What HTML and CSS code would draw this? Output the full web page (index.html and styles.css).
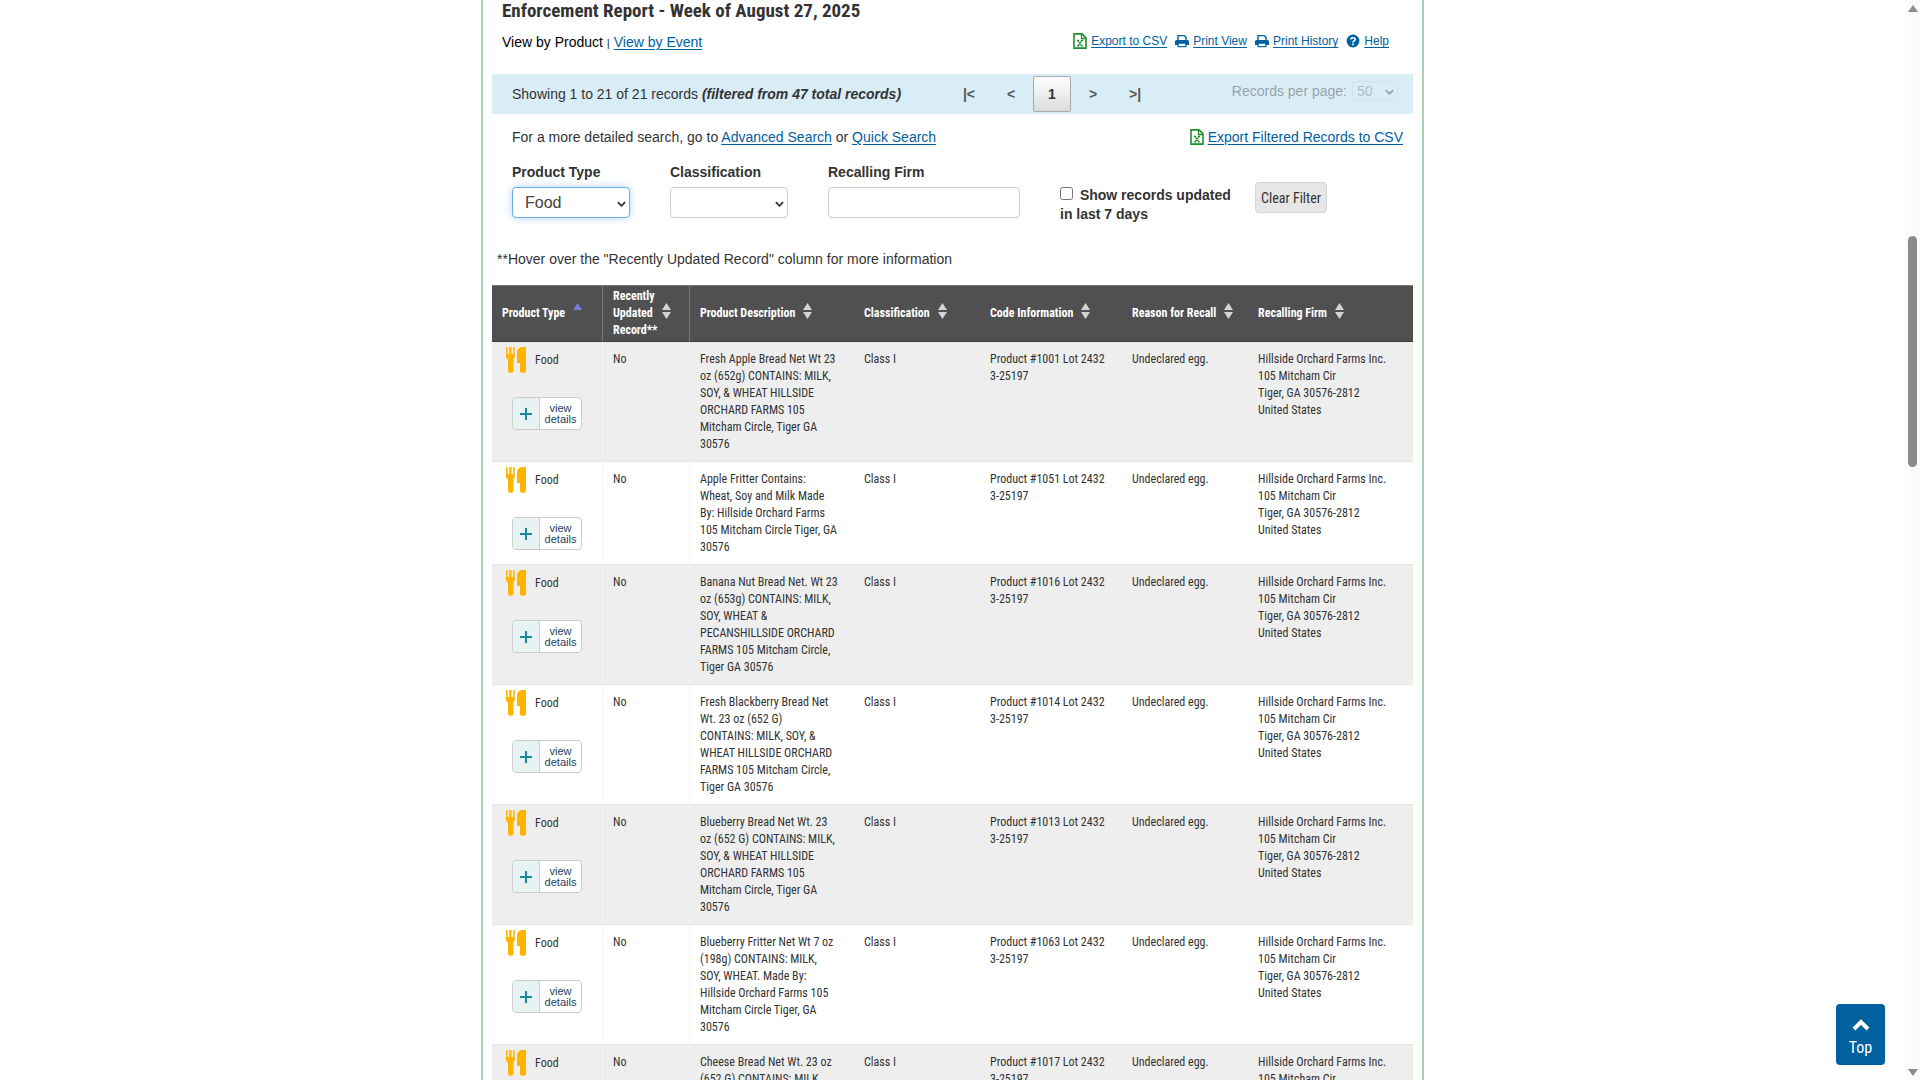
FILE: index.html
```html
<!DOCTYPE html>
<html lang="en">
<head>
<meta charset="utf-8">
<title>Enforcement Report - Week of August 27, 2025</title>
<link rel="stylesheet" href="styles.css">
</head>
<body>
<svg class="sprite" width="0" height="0" aria-hidden="true">
  <symbol id="csv" viewBox="0 0 14 16">
    <path d="M1 .9h8l4 4v10.2H1z" fill="#fff" stroke="#1e8e2e" stroke-width="1.6"/>
    <path d="M8.500 1v4.500H13" fill="none" stroke="#1e8e2e" stroke-width="1.300"/>
    <path d="M4.800 7.500l4.200 5.500M9 7.500l-4.200 5.500M3.800 7.400h2.400M7.800 7.400h2.400M3.800 13h2.400M7.800 13h2.400" fill="none" stroke="#1e8e2e" stroke-width="1.200"/>
  </symbol>
  <symbol id="print" viewBox="0 0 14 14">
    <path d="M3 7V1.600h6.200L11 3.400V7" fill="#fff" stroke="#0060a0" stroke-width="1.400"/>
    <path d="M1.500 6h11A1.500 1.500 0 0 1 14 7.500V11h-2.500v2.300h-9V11H0V7.500A1.500 1.500 0 0 1 1.500 6z" fill="#0060a0"/>
    <path d="M3.800 9.800h6.400v2.300H3.800z" fill="#fff"/>
  </symbol>
  <symbol id="help" viewBox="0 0 14 14">
    <circle cx="7" cy="7" r="6.400" fill="#0060a0"/>
    <path d="M4.800 5.400C4.900 3.200 9.200 3.200 9.200 5.400 9.200 6.900 7 6.800 7 8.400" fill="none" stroke="#fff" stroke-width="1.700"/>
    <path d="M6.100 9.400h1.800v1.800H6.100z" fill="#fff"/>
  </symbol>
  <symbol id="food" viewBox="0 0 20 26">
    <path d="M0 0h1.600v7h1.600V0h2.400v7h1.600V0h1.600v9.500c0 1.600-.8 2.400-1.300 2.900V24a1.800 1.800 0 0 1-1.800 1.800H3.800A1.800 1.800 0 0 1 2 24V12.400C1 11.800 0 11 0 9.500z" fill="#ffb400"/>
    <path d="M20 0v24a1.800 1.800 0 0 1-1.800 1.800h-2.400A1.800 1.800 0 0 1 14 24v-8h-3V5.500C11 2.500 13 0 16.500 0z" fill="#ffb400"/>
  </symbol>
  <symbol id="sort" viewBox="0 0 9 16">
    <path d="M4.500 0L9 7H0zM0 9h9l-4.500 7z" fill="#d4d4d4"/>
  </symbol>
</svg>

<main class="panel">
  <h1>Enforcement Report - Week of August 27, 2025</h1>
  <div class="top-row">
    <p class="views"><span class="current">View by Product</span> <small>|</small> <a href="#event">View by Event</a></p>
    <nav class="tools">
      <a href="#csv"><svg class="i-csv"><use href="#csv"/></svg><span>Export to CSV</span></a>
      <a href="#print"><svg class="i-tool"><use href="#print"/></svg><span>Print View</span></a>
      <a href="#history"><svg class="i-tool"><use href="#print"/></svg><span>Print History</span></a>
      <a href="#help"><svg class="i-tool"><use href="#help"/></svg><span>Help</span></a>
    </nav>
  </div>

  <div class="pager">
    <p class="info">Showing 1 to 21 of 21 records <strong><em>(filtered from 47 total records)</em></strong></p>
    <div class="pages">
      <button type="button">|&lt;</button>
      <button type="button">&lt;</button>
      <button type="button" class="active">1</button>
      <button type="button">&gt;</button>
      <button type="button">&gt;|</button>
    </div>
    <div class="per-page">
      <label for="per">Records per page:</label>
      <span class="select small"><select id="per" disabled><option>50</option></select><svg viewBox="0 0 10 6"><path d="M1 1l4 4 4-4"/></svg></span>
    </div>
  </div>

  <div class="search-row">
    <p>For a more detailed search, go to <a href="#advanced">Advanced Search</a> or <a href="#quick">Quick Search</a></p>
    <a class="filtered" href="#filtered"><svg class="i-csv"><use href="#csv"/></svg><span>Export Filtered Records to CSV</span></a>
  </div>

  <form class="filters">
    <div class="field">
      <label for="ptype">Product Type</label>
      <span class="select focus"><select id="ptype"><option>Food</option></select><svg viewBox="0 0 10 6"><path d="M1 1l4 4 4-4"/></svg></span>
    </div>
    <div class="field">
      <label for="class">Classification</label>
      <span class="select"><select id="class"><option></option></select><svg viewBox="0 0 10 6"><path d="M1 1l4 4 4-4"/></svg></span>
    </div>
    <div class="field firm">
      <label for="firm">Recalling Firm</label>
      <input id="firm" type="text">
    </div>
    <label class="check"><input type="checkbox"> Show records updated in last 7 days</label>
    <button class="clear" type="button">Clear Filter</button>
  </form>

  <p class="note">**Hover over the "Recently Updated Record" column for more information</p>

  <table>
    <colgroup><col class="c1"><col class="c2"><col class="c3"><col class="c4"><col class="c5"><col class="c6"><col class="c7"></colgroup>
    <thead>
      <tr>
        <th><span class="th">Product Type <svg class="asc" viewBox="0 0 9 16"><path d="M4.500 0L9 7H0z"/></svg></span></th>
        <th class="updated"><span class="th"><span>Recently<br>Updated<br>Record**</span><svg><use href="#sort"/></svg></span></th>
        <th><span class="th">Product Description <svg><use href="#sort"/></svg></span></th>
        <th><span class="th">Classification <svg><use href="#sort"/></svg></span></th>
        <th><span class="th">Code Information <svg><use href="#sort"/></svg></span></th>
        <th><span class="th">Reason for Recall <svg><use href="#sort"/></svg></span></th>
        <th><span class="th">Recalling Firm <svg><use href="#sort"/></svg></span></th>
      </tr>
    </thead>
    <tbody id="rows"></tbody>
  </table>
</main>

<a class="to-top" href="#top"><svg viewBox="0 0 18 12"><path d="M2 10l7-7 7 7"/></svg>Top</a>
<div class="scrollbar" aria-hidden="true"><i class="up"></i><i class="thumb"></i><i class="down"></i></div>
<script src="rows.js"></script>
</body>
</html>
```
FILE: rows.js
```js
const records = [
  ["Fresh Apple Bread Net Wt 23|oz (652g) CONTAINS: MILK,|SOY, & WHEAT HILLSIDE|ORCHARD FARMS 105|Mitcham Circle, Tiger GA|30576", "1001"],
  ["Apple Fritter Contains:|Wheat, Soy and Milk Made|By: Hillside Orchard Farms|105 Mitcham Circle Tiger, GA|30576", "1051"],
  ["Banana Nut Bread Net. Wt 23|oz (653g) CONTAINS: MILK,|SOY, WHEAT &|PECANSHILLSIDE ORCHARD|FARMS 105 Mitcham Circle,|Tiger GA 30576", "1016"],
  ["Fresh Blackberry Bread Net|Wt. 23 oz (652 G)|CONTAINS: MILK, SOY, &|WHEAT HILLSIDE ORCHARD|FARMS 105 Mitcham Circle,|Tiger GA 30576", "1014"],
  ["Blueberry Bread Net Wt. 23|oz (652 G) CONTAINS: MILK,|SOY, & WHEAT HILLSIDE|ORCHARD FARMS 105|Mitcham Circle, Tiger GA|30576", "1013"],
  ["Blueberry Fritter Net Wt 7 oz|(198g) CONTAINS: MILK,|SOY, WHEAT. Made By:|Hillside Orchard Farms 105|Mitcham Circle Tiger, GA|30576", "1063"],
  ["Cheese Bread Net Wt. 23 oz|(652 G) CONTAINS: MILK,|SOY, & WHEAT HILLSIDE|ORCHARD FARMS 105|Mitcham Circle, Tiger GA|30576", "1017"]
];
document.getElementById("rows").innerHTML = records.map(([text, code]) => `
  <tr>
    <td class="type"><div class="kind"><svg><use href="#food"/></svg>Food</div>
      <button class="details" type="button"><b><svg viewBox="0 0 12 12"><path d="M6 0v12M0 6h12"/></svg></b><span>view<br>details</span></button></td>
    <td>No</td>
    <td>${text.replace(/&/g, "&amp;").replace(/\|/g, "<br>")}</td>
    <td>Class I</td>
    <td>Product #${code} Lot 2432<br>3-25197</td>
    <td>Undeclared egg.</td>
    <td>Hillside Orchard Farms Inc.<br>105 Mitcham Cir<br>Tiger, GA 30576-2812<br>United States</td>
  </tr>`).join("");
```
FILE: styles.css
```css
* { box-sizing: border-box; }
body {
  margin: 0;
  height: 100vh;
  overflow: hidden;
  padding-right: 15px;
  background: #fff;
  color: #333;
  font: 14px/20px "Liberation Sans", Arial, sans-serif;
}
h1, p { margin: 0; }
a { color: #0060a0; text-underline-offset: 2px; }
.sprite { position: absolute; }
.panel {
  max-width: 943px;
  margin: 0 auto;
  padding: 0 9px;
  border: solid #a8d1ac;
  border-width: 0 2px;
}
h1 {
  padding: 0 10px;
  font: bold 19px/22px "Roboto Condensed", "Liberation Sans Narrow", sans-serif;
}
.top-row { display: flex; justify-content: space-between; padding: 10px 24px 0 10px; }
.views .current { color: #000; }
.tools { display: flex; gap: 8px; font-size: 12px; line-height: 18px; align-self: flex-start; }
.tools a, .filtered { display: flex; gap: 4px; align-items: center; text-decoration: none; }
.tools a span, .filtered span { text-decoration: underline; }
.i-csv { width: 14px; height: 16px; }
.i-tool { width: 14px; height: 14px; }

.pager {
  display: flex;
  align-items: center;
  height: 40px;
  margin-top: 21px;
  padding: 0 15px 0 20px;
  background: #d9edf7;
}
.info { flex: 0 0 436px; }
.pages { display: flex; }
.pages button {
  width: 42px;
  height: 36px;
  border: 1px solid transparent;
  border-radius: 2px;
  background: none;
  color: #555;
  font: bold 14px "Liberation Sans", Arial, sans-serif;
}
.pages .active { width: 38px; margin: 0 1px; border-color: #aaa; background: linear-gradient(#fff, #dcdcdc); color: #333; }
.per-page { display: flex; gap: 5px; margin-left: auto; padding-bottom: 6px; opacity: .4; }

.select { position: relative; display: block; }
.select svg { position: absolute; right: 4px; top: 50%; width: 9px; height: 6px; margin-top: -2px; fill: none; stroke: #333; stroke-width: 2; }
select, .firm input {
  appearance: none;
  display: block;
  width: 100%;
  height: 31px;
  padding: 0 12px;
  border: 1px solid #ccc;
  border-radius: 4px;
  background: #fff;
  color: #444;
  font: 16px "Liberation Sans", Arial, sans-serif;
}
.focus select { border-color: #66afe9; box-shadow: 0 0 8px #b3d7f4; }
.small select { width: 46px; height: 20px; padding: 0 4px; background: transparent; border-color: #ccc; font-size: 14px; }

.search-row { display: flex; justify-content: space-between; padding: 13px 10px 0 20px; }
.filters { display: flex; align-items: flex-start; padding: 15px 20px 0; }
.field { flex: 0 0 118px; margin-right: 40px; }
.field label { display: block; margin-bottom: 5px; font-weight: bold; }
.firm { flex-basis: 192px; }
.check { flex: 0 0 180px; margin: 24px 15px 0 0; line-height: 19px; font-weight: bold; }
.check input { margin: 0 3px 0 0; }
.clear { padding: 0 5px; height: 31px; margin-top: 20px; border: 1px solid #d4d4d4; border-radius: 4px; background: #e6e6e6; color: #333; font: 14px "Roboto Condensed", "Liberation Sans Narrow", sans-serif; }
.note { padding: 25px 5px 16px; }

table { width: 100%; table-layout: fixed; border-collapse: separate; border-spacing: 0; font: 12px/17px "Roboto Condensed", "Liberation Sans Narrow", sans-serif; }
.c1 { width: 111px; } .c2 { width: 87px; } .c3 { width: 164px; } .c4, .c6 { width: 126px; } .c5 { width: 142px; }
thead tr { background: #505050; color: #fff; }
th { height: 57px; padding: 2px 10px; border-top: 1px solid #777; border-bottom: 1px solid #3c3c3c; text-align: left; }
th:nth-child(-n+2) { border-right: 1px solid #777; }
.th { display: flex; gap: 8px; align-items: center; white-space: nowrap; }
.th svg { width: 9px; height: 16px; margin-bottom: 6px; }
.updated .th { gap: 4px; }
.th .asc { fill: #7b7bdd; }
td { padding: 9px 10px 8px; border-bottom: 1px solid #e4e4e4; vertical-align: top; }
tbody tr:nth-child(odd) { background: #eee; }
td:nth-child(-n+2) { border-right: 1px solid #f5f5f5; }
.type { padding: 5px 14px 0; }
.kind { display: flex; align-items: center; gap: 9px; height: 26px; }
.kind svg { width: 20px; height: 26px; }
.details { display: flex; width: 70px; height: 33px; margin: 24px 0 0 6px; padding: 0; border: 1px solid #ccc; border-radius: 4px; overflow: hidden; background: #fff; color: #24425c; font: 11px/11px "Liberation Sans", Arial, sans-serif; }
.details b { display: flex; width: 27px; height: 100%; align-items: center; justify-content: center; background: #e8f2f2; border-right: 1px solid #ccc; }
.details b svg { width: 12px; height: 12px; stroke: #16899a; stroke-width: 2; }
.details span { flex: 1; align-self: center; }

.to-top { position: fixed; right: 35px; bottom: 15px; display: flex; flex-direction: column; align-items: center; width: 49px; height: 61px; padding-top: 15px; border-radius: 4px; background: #0060a0; color: #fff; font: 16px/20px "Roboto Condensed", "Liberation Sans Narrow", sans-serif; text-decoration: none; }
.to-top svg { width: 18px; height: 12px; margin-bottom: 7px; fill: none; stroke: #fff; stroke-width: 4; }
.scrollbar { position: fixed; inset: 0 0 0 auto; width: 15px; background: #fbfbfb; }
.scrollbar i { position: absolute; left: 3px; }
.thumb { top: 236px; width: 9px; height: 231px; border-radius: 5px; background: #8b8b8b; }
.up, .down { border: 5px solid transparent; border-top-width: 0; border-bottom: 7px solid #8b8b8b; }
.up { top: 5px; }
.down { bottom: 4px; transform: rotate(180deg); }
```
